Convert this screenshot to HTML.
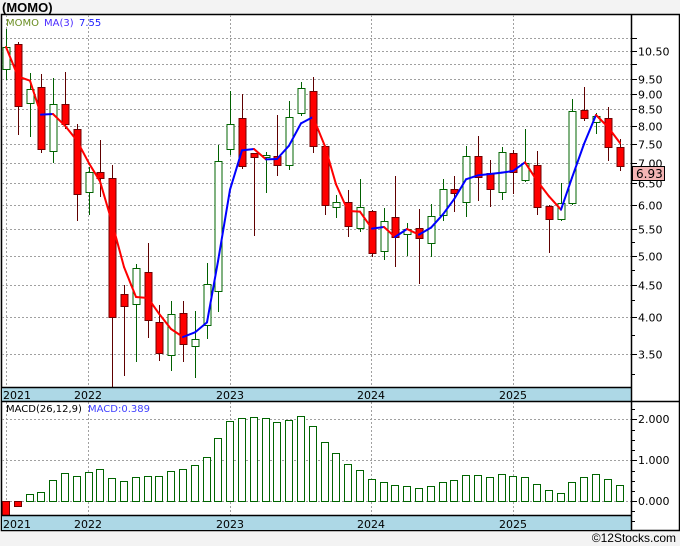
<!DOCTYPE html>
<html><head><meta charset="utf-8">
<style>
html,body{margin:0;padding:0;width:680px;height:546px;background:#f3f3f3;overflow:hidden}
svg{display:block}
text{font-family:"DejaVu Sans","Liberation Sans",sans-serif}
</style></head><body>
<svg id="s" width="680" height="546" xmlns="http://www.w3.org/2000/svg">
<rect x="0" y="0" width="680" height="546" fill="#f3f3f3"/>
<rect x="1.5" y="14.5" width="678" height="516" fill="#fff" stroke="#000" stroke-width="1.5"/>
<text x="2" y="12" font-size="13" font-weight="bold" fill="#000" style="font-family:'Liberation Sans',sans-serif">(MOMO)</text>
<g id="g"></g>
<text x="676" y="542" font-size="12" fill="#000" text-anchor="end" style="font-family:'Liberation Sans',sans-serif">©12Stocks.com</text>
</svg>
<script>
var g=document.getElementById('g'),h='';
function L(x1,y1,x2,y2,c,w,d){h+='<line x1="'+x1+'" y1="'+y1+'" x2="'+x2+'" y2="'+y2+'" stroke="'+c+'" stroke-width="'+(w||1)+'"'+(d?' stroke-dasharray="'+d+'"':'')+'/>';}
function T(x,y,s,c,sz,a){h+='<text x="'+x+'" y="'+y+'" fill="'+c+'" font-size="'+(sz||11)+'"'+(a?' text-anchor="'+a+'"':'')+'>'+s+'</text>';}
function py(p){return 51+(Math.log(10.5)-Math.log(p))*275.8;}
var lv=[11,10.5,10,9.5,9,8.5,8,7.5,7,6.5,6,5.5,5,4.5,4,3.5];
lv.forEach(function(p){var y=Math.round(py(p))+.5;L(2,y,631,y,'#a0a0a0',1,'2,2');L(631,y,637,y,'#000',1);
 if(p!=11&&p!=10)T(638,y+4,p.toFixed(2),'#000',11);});
[3.75,4.25,4.75,5.25,3.25].forEach(function(p){var y=Math.round(py(p))+.5;L(631,y,635,y,'#000',1);});
var yrs=[[6,'2021'],[88,'2022'],[230,'2023'],[371,'2024'],[513,'2025']];
yrs.forEach(function(v){L(v[0]+.5,15,v[0]+.5,387,'#a0a0a0',1,'2,2');L(v[0]+.5,402,v[0]+.5,515,'#a0a0a0',1,'2,2');});
[419,460,501].forEach(function(y,i){L(2,y+.5,631,y+.5,'#a0a0a0',1,'2,2');L(631,y+.5,637,y+.5,'#000');T(638,y+4,['2.000','1.000','0.000'][i],'#000',11);});
[409,430,440,450,471,481,491,511,521].forEach(function(y){L(631,y+.5,635,y+.5,'#000');});
var C=[[1,47,69,29,80],[0,44,106,42,135],[1,89,103,73,137],[0,87,149,74,153],[1,104,151,78,163],[0,104,124,72,129],[0,129,194,124,221],[1,172,192,167,215],[0,172,178,140,197],[0,178,317,165,387],
[0,294,306,285,376],[1,268,304,264,362],[0,272,320,243,338],[0,322,353,305,361],[1,314,355,301,371],[0,313,344,301,362],[1,339,346,311,378],[1,284,325,263,339],[1,161,291,145,312],[1,124,149,91,155],
[0,118,166,94,169],[0,153,157,153,236],[1,155,157,152,193],[0,156,165,115,176],[1,117,165,101,170],[1,88,113,82,116],[0,91,146,77,153],[0,146,205,146,215],[1,202,207,195,218],[0,202,226,190,237],
[1,207,228,179,232],[0,211,253,210,257],[1,221,251,208,260],[0,217,237,176,267],[1,229,234,223,256],[0,228,238,209,284],[1,216,243,204,257],[1,189,215,179,221],[0,189,193,176,212],[1,156,202,146,217],
[0,156,177,136,201],[0,173,189,160,207],[1,152,192,147,200],[0,153,172,150,194],[1,163,180,129,182],[0,165,207,151,215],[0,206,219,205,253],[1,203,219,183,221],[1,111,203,99,205],[0,110,118,87,121],
[1,116,122,113,134],[0,118,147,107,161],[0,147,166,139,171]];
function cx(i){return Math.round(6+i*11.8);}
C.forEach(function(c,i){var x=cx(i)+.5;
 if(c[0]){L(x,c[3],x,c[4],'#006000');h+='<rect x="'+(x-3.5)+'" y="'+(c[1]+.5)+'" width="7" height="'+Math.max(1,c[2]-c[1])+'" fill="#fff" stroke="#006400"/>';}
 else{L(x,c[3],x,c[4],'#600000');h+='<rect x="'+(x-3.5)+'" y="'+(c[1]+.5)+'" width="7" height="'+Math.max(1,c[2]-c[1])+'" fill="#f00" stroke="#700000"/>';}
});
var cl=C.map(function(c){return c[0]?c[1]:c[2];}),ma=[];
for(var i=0;i<C.length;i++){var a=Math.max(0,i-2),s=0,n=0;for(var j=a;j<=i;j++){s+=cl[j];n++;}ma.push(s/n);}
for(var i=0;i<ma.length-1;i++){var col=ma[i+1]<ma[i]?'#0000ff':'#ff0000';h+='<line x1="'+cx(i)+'" y1="'+ma[i]+'" x2="'+cx(i+1)+'" y2="'+ma[i+1]+'" stroke="'+col+'" stroke-width="2" stroke-linecap="round"/>';}
var M=[0,0,494,492,480,473,476,472,469,478,481,477,476,476,471,469,465,457,438,421,418,417,418,422,420,416,426,442,453,464,470,479,482,485,486,488,486,482,480,475,475,477,474,476,477,484,490,493,482,477,474,479,485];
h+='<rect x="2.5" y="501.5" width="7" height="14" fill="#f00" stroke="#700000"/>';
h+='<rect x="14.5" y="501.5" width="7" height="5" fill="#f00" stroke="#700000"/>';
for(var i=2;i<M.length;i++){var x=cx(i);h+='<rect x="'+(x-3.5)+'" y="'+(M[i]+.5)+'" width="7" height="'+(501-M[i])+'" fill="#fff" stroke="#006400"/>';}
h+='<rect x="2" y="388" width="629" height="13" fill="#add8e6"/>';
h+='<rect x="2" y="516" width="629" height="14" fill="#add8e6"/>';
L(2,387.5,631,387.5,'#000',1.5);L(2,401.5,680,401.5,'#000',1.5);L(2,515.5,631,515.5,'#000',1.5);
L(631.5,15,631.5,530,'#000',1.5);
yrs.forEach(function(v){var x=v[0]==6?3:v[0]-14;T(x,399,v[1],'#000',11);T(x,528,v[1],'#000',11);});
T(6,26,'MOMO','#6b8e23',10);T(44,26,'MA(3)','#4b2bff',10);T(79,26,'7.55','#2020ff',10);
T(6,412,'MACD(26,12,9)','#000',10);T(88,412,'MACD:0.389','#4040ff',10);
h+='<rect x="632.5" y="166.5" width="32" height="14" fill="#f4b4b4" stroke="#000"/>';
T(636,178,'6.93','#000',12);
g.innerHTML=h;
</script>
</body></html>
